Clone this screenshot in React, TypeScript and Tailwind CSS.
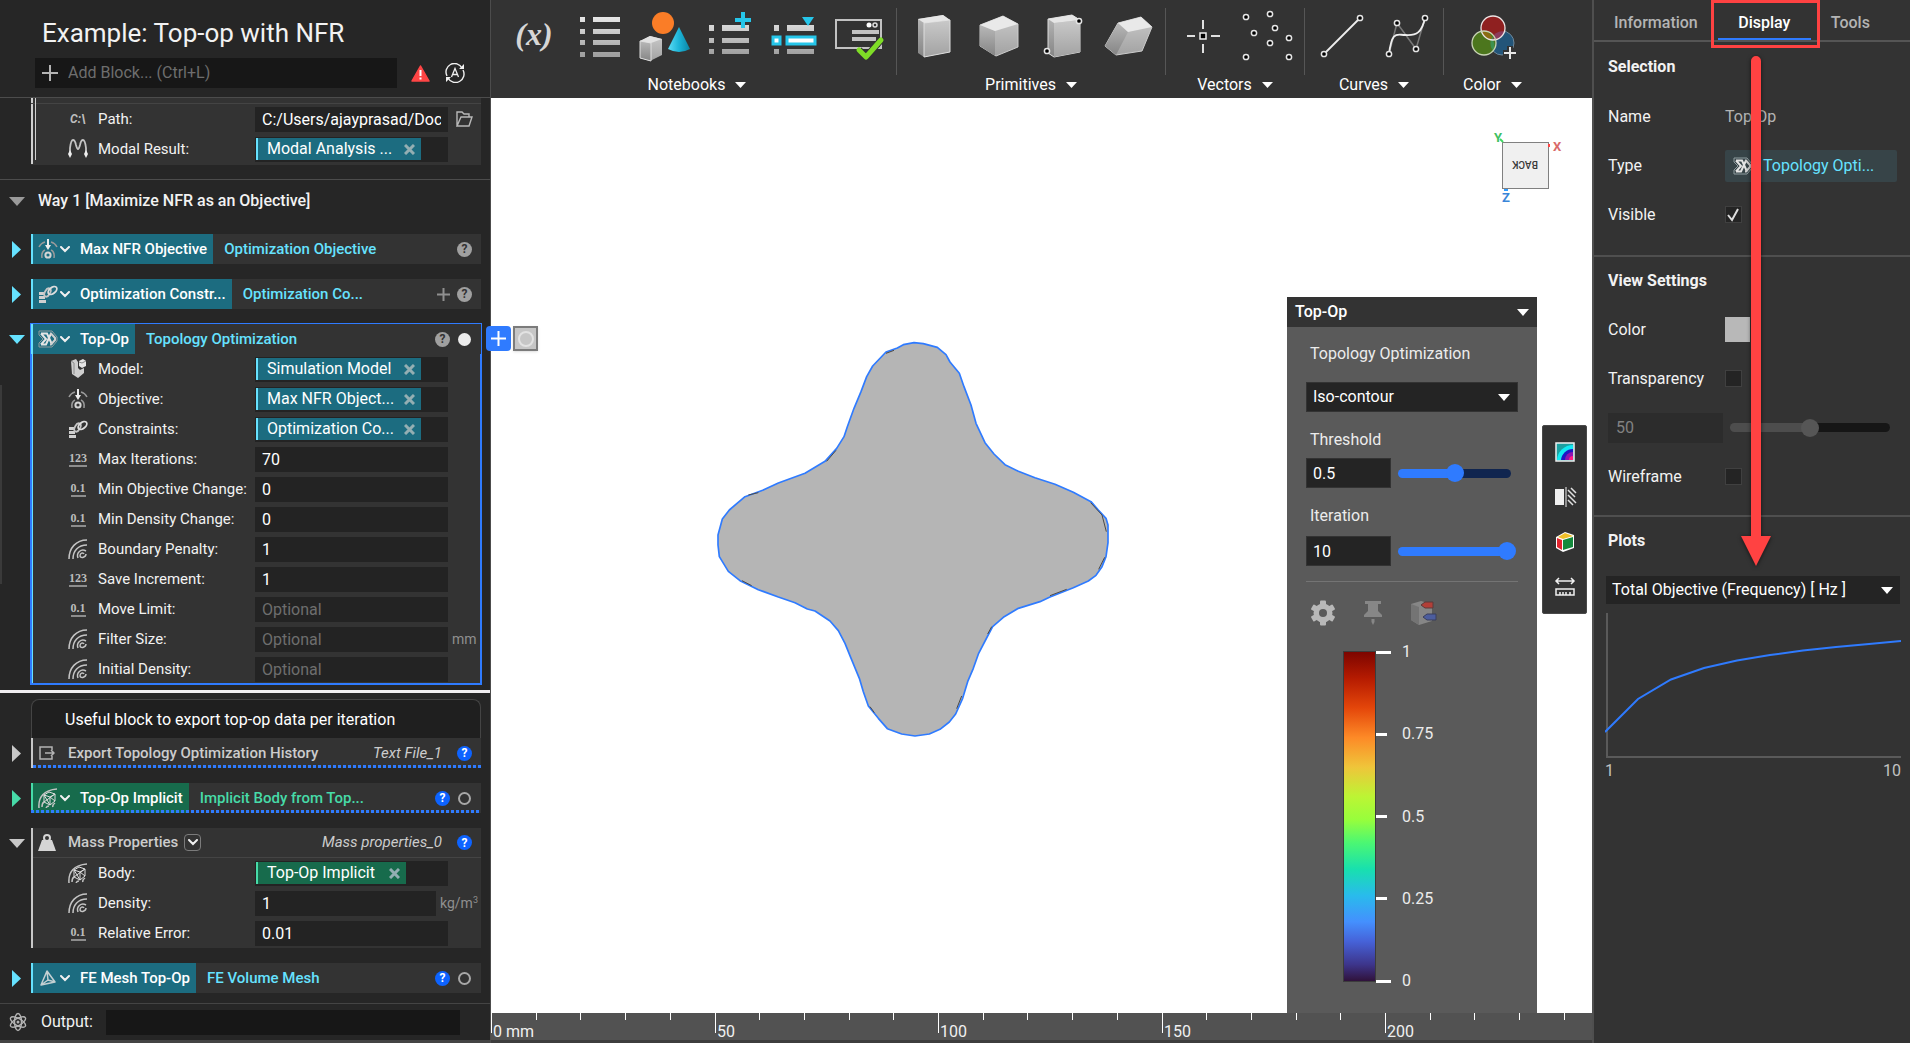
import React, { useState } from 'react';

type Tone = 'cyan' | 'green';

/* ================= ICONS ================= */

const CaretRight: React.FC<{ className?: string }> = ({ className = '' }) => (
  <svg className={className} width="9" height="17" viewBox="0 0 9 17" aria-hidden="true">
    <path d="M0 0L9 8.5L0 17Z" fill="currentColor" />
  </svg>
);

const CaretDown: React.FC<{ className?: string }> = ({ className = '' }) => (
  <svg className={className} width="16" height="9" viewBox="0 0 16 9" aria-hidden="true">
    <path d="M0 0H16L8 9Z" fill="currentColor" />
  </svg>
);

const SmallCaret: React.FC<{ className?: string }> = ({ className = '' }) => (
  <svg className={className} width="12" height="7" viewBox="0 0 12 7" aria-hidden="true">
    <path d="M0 0H12L6 7Z" fill="#ffffff" />
  </svg>
);

const Chevron = () => (
  <svg width="10" height="7" viewBox="0 0 10 7" fill="none" aria-hidden="true">
    <path d="M1 1L5 5L9 1" stroke="#f0f0f0" strokeWidth="2" strokeLinecap="round" />
  </svg>
);

const Help: React.FC<{ blue?: boolean }> = ({ blue }) => (
  <button
    aria-label="Help"
    className={`flex h-[15px] w-[15px] shrink-0 items-center justify-center rounded-full text-[12px] font-bold leading-none ${
      blue ? 'bg-[#0d63ff] text-white' : 'bg-[#a0a0a0] text-[#333333]'
    }`}
  >
    ?
  </button>
);

const Ring: React.FC<{ filled?: boolean }> = ({ filled }) => (
  <button aria-label="Toggle visibility" className="flex h-[15px] w-[15px] shrink-0 items-center justify-center">
    <span
      className={`block h-[13px] w-[13px] rounded-full ${
        filled ? 'bg-[#ececec]' : 'border-2 border-[#a8a8a8]'
      }`}
    />
  </button>
);

const OutlinedIcon: React.FC<{ children: React.ReactNode; size?: number }> = ({ children, size = 20 }) => (
  <svg width={size} height={size} viewBox="0 0 20 20" fill="none" stroke="#c4c4c4" aria-hidden="true">
    {children}
  </svg>
);

const TopOpIcon = () => (
  <OutlinedIcon>
    <path d="M1 2H14L19 8V12L14 18H1V14L5 10L1 6Z" stroke="#8f9c9f" strokeWidth="1" />
    <path d="M3 4.5H9L14 15.5M3 15.500H8L13 4.500M3 4.500L8 10L3 15.500" stroke="#e4e4e4" strokeWidth="2" />
    <path d="M12 4.500H13L17 9V11L13 15.500H12" stroke="#d0d0d0" strokeWidth="2" />
  </OutlinedIcon>
);

const ObjectiveIcon = () => (
  <OutlinedIcon>
    <path d="M10 0V9" stroke="#eeeeee" strokeWidth="2" />
    <path d="M7 6H13L10 11Z" fill="#eeeeee" stroke="none" />
    <circle cx="10" cy="16" r="2.600" stroke="#d4d4d4" strokeWidth="2" />
    <path d="M4 19Q3 13 7 11M16 19Q17 13 13 11M1 8Q3 4 7 3M19 8Q17 4 13 3" strokeWidth="1.5" stroke="#9b9b9b" />
  </OutlinedIcon>
);

const ConstraintIcon = () => (
  <OutlinedIcon>
    <path d="M1 8H6V11H1ZM1 12H7V15H1ZM1 16H8V19H1Z" fill="#d0d0d0" stroke="none" />
    <ellipse cx="9.500" cy="8.500" rx="4.500" ry="2.600" transform="rotate(-60 9.5 8.5)" strokeWidth="1.8" />
    <ellipse cx="14.500" cy="6.500" rx="5" ry="3" transform="rotate(-40 14.5 6.5)" strokeWidth="1.8" stroke="#dddddd" />
  </OutlinedIcon>
);

const ModelIcon = () => (
  <OutlinedIcon>
    <path d="M3 2L8 0L10 3V9L12 11L16 9V14L10 19L4 15Z" fill="#cfcfcf" stroke="none" />
    <path d="M11 2L15 0L18 2V7L14 9L11 7Z" fill="#e4e4e4" stroke="none" />
    <path d="M3 2L6 4V15M11 3L14 4L18 2" stroke="#8a8a8a" strokeWidth="1" />
  </OutlinedIcon>
);

const ScalarFieldIcon = () => (
  <OutlinedIcon>
    <path d="M1 20C1 9 8 1 19 1" strokeWidth="1.5" />
    <path d="M5 20C5 12 10 6 19 6" strokeWidth="1.5" />
    <path d="M10 19C8 14 13 9 18 12M18 15C18 18 13 20 12 17C12 14 15 13 16 15" strokeWidth="1.5" />
  </OutlinedIcon>
);

const BodyIcon = () => (
  <OutlinedIcon>
    <path d="M1 20C0 9 6 2 19 1M4 19Q4 15 6 14" strokeWidth="1.5" />
    <path d="M6 7L11 4L17 6V13L12 17L6 14ZM6 7L12 9L17 6M12 9V17M6 14L17 6M6 7L12 17M12 9L17 13" strokeWidth="1" stroke="#dddddd" />
    <path d="M8 20Q9 18 11 18M15 19Q14 17 17 15" strokeWidth="1.5" />
  </OutlinedIcon>
);

const NumberIcon: React.FC<{ text: string }> = ({ text }) => (
  <span className="border-b-2 border-[#8d8d8d] font-['Liberation_Serif',serif] text-[12px] font-bold leading-[13px] text-[#bcbcbc]">
    {text}
  </span>
);

const PathIcon = () => (
  <span className="text-[12px] font-bold italic leading-none text-[#bdbdbd]">C:\</span>
);

const ModalIcon = () => (
  <OutlinedIcon>
    <path d="M2 15V9Q3 1 5 1Q7 1 8 6Q9 10 10 10Q11 10 12 6Q13 1 15 1Q17 1 18 9V15" strokeWidth="1.8" />
    <path d="M2 11L4 15L2 19L0 15ZM18 11L20 15L18 19L16 15Z" fill="#eeeeee" stroke="none" />
  </OutlinedIcon>
);

const MeshIcon = () => (
  <svg width="16" height="16" viewBox="0 0 16 16" fill="none" stroke="#c4d0d2" strokeWidth="1.5" aria-hidden="true">
    <path d="M7 1L1 15L15 12ZM7 1L8 10L1 15M8 10L15 12" strokeLinejoin="round" />
  </svg>
);

const ExportIcon = () => (
  <svg width="16" height="14" viewBox="0 0 16 14" fill="none" stroke="#b4b4b4" strokeWidth="1.5" aria-hidden="true">
    <path d="M13 4V1H1V13H13V10M6 7H15M12 4L15 7L12 10" />
  </svg>
);

const WeightIcon = () => (
  <svg width="18" height="18" viewBox="0 0 18 18" aria-hidden="true">
    <circle cx="9" cy="4" r="3" fill="none" stroke="#d5d5d5" strokeWidth="2" />
    <path d="M4 6H14L18 17H0Z" fill="#d5d5d5" />
  </svg>
);

const AtomIcon = () => (
  <svg width="18" height="20" viewBox="0 0 18 20" fill="none" stroke="#b4b4b4" strokeWidth="1.4" aria-hidden="true">
    <ellipse cx="9" cy="10" rx="3.5" ry="8.5" />
    <ellipse cx="9" cy="10" rx="3.5" ry="8.5" transform="rotate(60 9 10)" />
    <ellipse cx="9" cy="10" rx="3.5" ry="8.5" transform="rotate(-60 9 10)" />
    <circle cx="9" cy="10" r="1.5" fill="#b4b4b4" stroke="none" />
  </svg>
);

/* ================= NOTEBOOK ================= */

const Caret: React.FC<{ tone?: Tone; open?: boolean; dim?: boolean }> = ({ tone, open, dim }) => {
  const color =
    tone === 'cyan' ? 'text-[#66e2ff]' : tone === 'green' ? 'text-[#47dba8]' : dim ? 'text-[#9a9a9a]' : 'text-[#c8c8c8]';
  return (
    <button
      aria-label={open ? 'Collapse' : 'Expand'}
      className={`flex h-[30px] w-[31px] shrink-0 items-center pl-[9px] ${color}`}
    >
      {open ? <CaretDown /> : <CaretRight className="ml-[3px]" />}
    </button>
  );
};

interface TagRowProps {
  tone: Tone;
  icon: React.ReactNode;
  name: string;
  type: string;
  dotted?: boolean;
  children: React.ReactNode;
}

const TagRow: React.FC<TagRowProps> = ({ tone, icon, name, type, dotted, children }) => (
  <div className="relative flex h-[30px] items-center bg-[#333333] pr-[9px]">
    <div
      className={`flex h-full items-center border-l-2 pl-[5px] pr-[6px] text-[15px] font-medium text-white ${
        tone === 'cyan' ? 'border-[#66e2ff] bg-[#1c6c80]' : 'border-[#47dba8] bg-[#176b4c]'
      }`}
    >
      <span className="flex w-[20px] justify-center">{icon}</span>
      <button aria-label="Block options" className="ml-[2px] mr-[10px]">
        <Chevron />
      </button>
      {name}
    </div>
    <span
      className={`ml-[11px] flex-1 text-[15px] font-medium ${tone === 'cyan' ? 'text-[#66e2ff]' : 'text-[#47dba8]'}`}
    >
      {type}
    </span>
    <div className="flex items-center gap-[7px]">{children}</div>
    {dotted && <DottedLine />}
  </div>
);

const DottedLine = () => (
  <div className="absolute inset-x-0 bottom-0 h-[3px] bg-[repeating-linear-gradient(to_right,#2f7bff_0_3px,transparent_3px_5px)]" />
);

const Chip: React.FC<{ tone: Tone; text: string; className: string }> = ({ tone, text, className }) => (
  <div
    className={`ml-px flex h-[22px] items-center justify-between border-l-2 pl-[9px] pr-[6px] text-[16px] leading-[22px] text-white ${className} ${
      tone === 'cyan' ? 'border-[#66e2ff] bg-[#1c6c80]' : 'border-[#47dba8] bg-[#176b4c]'
    }`}
  >
    {text}
    <button aria-label={`Remove ${text}`}>
      <svg width="11" height="11" viewBox="0 0 11 11" stroke="#93aeb2" strokeWidth="3" aria-hidden="true">
        <path d="M1 1L10 10M10 1L1 10" />
      </svg>
    </button>
  </div>
);

interface FieldProps {
  icon: React.ReactNode;
  label: string;
  value?: string;
  placeholder?: string;
  chip?: string;
  chipTone?: Tone;
  unit?: React.ReactNode;
  wideUnit?: boolean;
}

const Field: React.FC<FieldProps> = ({ icon, label, value, placeholder, chip, chipTone = 'cyan', unit, wideUnit }) => {
  const id = `field-${label.toLowerCase().replace(/[^a-z]+/g, '-')}`;
  return (
    <div className="flex h-[30px] items-center">
      <span className="ml-[35px] flex w-[24px] justify-center">{icon}</span>
      <label htmlFor={id} className="ml-[8px] w-[157px] whitespace-nowrap text-[15px] text-[#f2f2f2]">
        {label}:
      </label>
      {chip ? (
        <div id={id} className="flex h-[25px] w-[193px] items-center bg-[#232323]">
          <Chip tone={chipTone} text={chip} className={chipTone === 'cyan' ? 'w-[165px]' : 'w-[150px]'} />
        </div>
      ) : (
        <input
          id={id}
          defaultValue={value}
          placeholder={placeholder}
          className={`h-[25px] bg-[#232323] px-[7px] text-[16px] text-white outline-none placeholder:text-[#6e6e6e] ${
            wideUnit ? 'w-[181px]' : 'w-[193px]'
          }`}
        />
      )}
      {unit && <span className="ml-[4px] whitespace-nowrap text-[14px] text-[#8f8f8f]">{unit}</span>}
    </div>
  );
};

const Block: React.FC<{ caret: React.ReactNode; children: React.ReactNode }> = ({ caret, children }) => (
  <div className="flex items-start pr-[9px]">
    {caret}
    <div className="min-w-0 flex-1">{children}</div>
  </div>
);

const Notebook = () => (
  <aside className="relative z-10 flex w-[491px] shrink-0 flex-col border-r border-[#4c4c4c] bg-[#262626]">
    <header className="border-b border-[#4c4c4c] pb-[9px] pl-[35px] pt-[16px]">
      <h1 className="pl-[7px] text-[26px] leading-[34px] text-[#f2f2f2]">Example: Top-op with NFR</h1>
      <div className="mt-[8px] flex items-center">
        <div className="flex h-[30px] w-[362px] items-center bg-[#171717] pl-[7px]">
          <svg width="16" height="16" viewBox="0 0 16 16" stroke="#b4b4b4" strokeWidth="2" aria-hidden="true">
            <path d="M8 0V16M0 8H16" />
          </svg>
          <input
            aria-label="Add Block"
            placeholder="Add Block... (Ctrl+L)"
            className="ml-[10px] flex-1 bg-transparent text-[16px] outline-none placeholder:text-[#6e6e6e]"
          />
        </div>
        <button aria-label="Warnings" className="ml-[14px]">
          <svg width="19" height="17" viewBox="0 0 19 17" aria-hidden="true">
            <path d="M9.5 1L18 16H1Z" fill="#ff4545" stroke="#ff4545" strokeWidth="1.5" strokeLinejoin="round" />
            <path d="M9.5 5V11M9.5 12.5V14.5" stroke="#fff" strokeWidth="2" />
          </svg>
        </button>
        <button aria-label="Auto update" className="ml-[15px]">
          <svg width="20" height="20" viewBox="0 0 20 20" fill="none" stroke="#f0f0f0" strokeWidth="1.4" aria-hidden="true">
            <path d="M2 13A8.5 8.5 0 0 1 17 5M18 7A8.5 8.5 0 0 1 3 15" />
            <path d="M19 1V6H14ZM1 19V14H6Z" fill="#f0f0f0" stroke="none" />
            <path d="M6.500 14L10 5.500L13.500 14M7.500 11.500H12.500" strokeWidth="1.300" />
          </svg>
        </button>
      </div>
    </header>

    <div className="relative flex-1">
      <div className="absolute left-0 top-[287px] h-[199px] w-[2px] bg-[#3a3a3a]" />

      <div className="ml-[31px] mr-[9px] bg-[#333333] pb-px">
        <div className="relative border-l-2 border-[#d0d0d0] pt-[5px]">
          <div className="absolute bottom-[4px] left-[2px] top-0 w-px bg-[#d0d0d0]" />
          <div className="-ml-[2px] border-t border-[#444444]">
            <div className="flex items-center">
              <Field icon={<PathIcon />} label="Path" value="C:/Users/ajayprasad/Documents/modal" />
              <button aria-label="Browse" className="ml-[8px]">
                <svg width="17" height="16" viewBox="0 0 17 16" fill="none" stroke="#b8b8b8" strokeWidth="1.4" aria-hidden="true">
                  <path d="M1 15V1H6L8 3H13V6M1 15L5 6H16L13 15Z" />
                </svg>
              </button>
            </div>
            <Field icon={<ModalIcon />} label="Modal Result" chip="Modal Analysis ..." />
          </div>
        </div>
      </div>

      <div className="mt-[14px] border-t border-[#4c4c4c]" />
      <div className="mt-[6px] flex items-center">
        <Caret open dim />
        <h2 className="pl-[7px] text-[16px] font-medium text-[#f2f2f2]">Way 1 [Maximize NFR as an Objective]</h2>
      </div>

      <div className="mt-[18px] flex flex-col gap-[15px]">
        <Block caret={<Caret tone="cyan" />}>
          <TagRow tone="cyan" icon={<ObjectiveIcon />} name="Max NFR Objective" type="Optimization Objective">
            <Help />
          </TagRow>
        </Block>
        <Block caret={<Caret tone="cyan" />}>
          <TagRow tone="cyan" icon={<ConstraintIcon />} name="Optimization Constr..." type="Optimization Co...">
            <button aria-label="Add item">
              <svg width="13" height="13" viewBox="0 0 13 13" stroke="#8f8f8f" strokeWidth="2" aria-hidden="true">
                <path d="M6.500 0V13M0 6.500H13" />
              </svg>
            </button>
            <Help />
          </TagRow>
        </Block>
        <Block caret={<Caret tone="cyan" open />}>
          <div className="relative bg-[#333333] outline-2 -outline-offset-1 outline-[#2f7bff]">
            <TagRow tone="cyan" icon={<TopOpIcon />} name="Top-Op" type="Topology Optimization">
              <Help />
              <Ring filled />
            </TagRow>
            <div className="border-l-2 border-[#66e2ff]">
              <div className="-ml-[2px]">
                <Field icon={<ModelIcon />} label="Model" chip="Simulation Model" />
                <Field icon={<ObjectiveIcon />} label="Objective" chip="Max NFR Object..." />
                <Field icon={<ConstraintIcon />} label="Constraints" chip="Optimization Co..." />
                <Field icon={<NumberIcon text="123" />} label="Max Iterations" value="70" />
                <Field icon={<NumberIcon text="0.1" />} label="Min Objective Change" value="0" />
                <Field icon={<NumberIcon text="0.1" />} label="Min Density Change" value="0" />
                <Field icon={<ScalarFieldIcon />} label="Boundary Penalty" value="1" />
                <Field icon={<NumberIcon text="123" />} label="Save Increment" value="1" />
                <Field icon={<NumberIcon text="0.1" />} label="Move Limit" placeholder="Optional" />
                <Field icon={<ScalarFieldIcon />} label="Filter Size" placeholder="Optional" unit="mm" />
                <Field icon={<ScalarFieldIcon />} label="Initial Density" placeholder="Optional" />
              </div>
            </div>
            {/* actions floating beside the selected block */}
            <div className="absolute left-[calc(100%+5px)] top-[2px] flex gap-[2px]">
              <button aria-label="Add block" className="flex h-[25px] w-[25px] items-center justify-center rounded-[4px] bg-[#2f7bff]">
                <svg width="15" height="15" viewBox="0 0 15 15" stroke="#fff" strokeWidth="2" aria-hidden="true">
                  <path d="M7.500 0V15M0 7.500H15" />
                </svg>
              </button>
              <button
                aria-label="Isolate"
                className="flex h-[25px] w-[25px] items-center justify-center border-2 border-[#7b7b7b] bg-[#c6c6c6] shadow"
              >
                <span className="h-[16px] w-[16px] rounded-full border-2 border-[#e2e2e2]" />
              </button>
            </div>
          </div>
        </Block>
      </div>

      <div className="my-[6px] h-[3px] bg-[#f0eef0]" />

      <div className="flex flex-col gap-[15px]">
        <div>
          <p className="ml-[31px] mr-[9px] h-[39px] rounded-t-[8px] border border-b-0 border-[#444444] bg-[#1f1f1f] pl-[33px] text-[16px] leading-[40px] text-white">
            Useful block to export top-op data per iteration
          </p>
          <Block caret={<Caret />}>
            <div className="relative flex h-[30px] items-center border-l-2 border-[#c8c8c8] bg-[#333333] pl-[6px] pr-[9px]">
              <ExportIcon />
              <span className="ml-[13px] flex-1 text-[15px] font-medium text-[#cccccc]">Export Topology Optimization History</span>
              <span className="mr-[15px] text-[15px] italic text-[#cccccc]">Text File_1</span>
              <Help blue />
              <DottedLine />
            </div>
          </Block>
        </div>

        <Block caret={<Caret tone="green" />}>
          <TagRow tone="green" icon={<BodyIcon />} name="Top-Op Implicit" type="Implicit Body from Top..." dotted>
            <Help blue />
            <Ring />
          </TagRow>
        </Block>

        <Block caret={<Caret open />}>
          <div className="border-l-2 border-[#c8c8c8] bg-[#333333]">
            <div className="flex h-[30px] items-center border-b border-[#444444] pl-[5px] pr-[9px]">
              <WeightIcon />
              <span className="ml-[12px] text-[15px] font-medium text-[#cccccc]">Mass Properties</span>
              <button
                aria-label="Overloads"
                className="ml-[6px] flex h-[17px] w-[17px] items-center justify-center rounded-[4px] border border-[#7b7b7b]"
              >
                <Chevron />
              </button>
              <span className="ml-auto mr-[15px] text-[15px] italic text-[#cccccc]">Mass properties_0</span>
              <Help blue />
            </div>
            <div className="-ml-[2px]">
              <Field icon={<BodyIcon />} label="Body" chip="Top-Op Implicit" chipTone="green" />
              <Field
                icon={<ScalarFieldIcon />}
                label="Density"
                value="1"
                wideUnit
                unit={
                  <>
                    kg/m<sup className="text-[9px]">3</sup>
                  </>
                }
              />
              <Field icon={<NumberIcon text="0.1" />} label="Relative Error" value="0.01" />
            </div>
          </div>
        </Block>

        <Block caret={<Caret tone="cyan" />}>
          <TagRow tone="cyan" icon={<MeshIcon />} name="FE Mesh Top-Op" type="FE Volume Mesh">
            <Help blue />
            <Ring />
          </TagRow>
        </Block>
      </div>
    </div>

    <footer className="flex h-[40px] items-center border-b-[3px] border-t border-[#444444] pl-[9px]">
      <AtomIcon />
      <label htmlFor="output" className="ml-[14px] w-[65px] text-[16px] text-[#f2f2f2]">
        Output:
      </label>
      <input id="output" className="h-[25px] w-[354px] bg-[#171717] px-[7px] text-white outline-none" />
    </footer>
  </aside>
);

/* ================= TOOLBAR ================= */

const Gradients = () => (
  <svg width="0" height="0" className="absolute" aria-hidden="true">
    <defs>
      <linearGradient id="metal" x1="0" y1="0" x2="0" y2="1">
        <stop offset="0" stopColor="#c9c9c9" />
        <stop offset="1" stopColor="#a2a2a2" />
      </linearGradient>
      <linearGradient id="metal-dark" x1="0" y1="0" x2="0" y2="1">
        <stop offset="0" stopColor="#b8b8b8" />
        <stop offset="1" stopColor="#858585" />
      </linearGradient>
      <linearGradient id="cone" x1="0" y1="0" x2="1" y2="0">
        <stop offset="0" stopColor="#5bdcf5" />
        <stop offset="0.5" stopColor="#1cb4d8" />
        <stop offset="1" stopColor="#0b84a4" />
      </linearGradient>
      <linearGradient id="fade" x1="0" y1="0" x2="0" y2="44" gradientUnits="userSpaceOnUse">
        <stop offset="0" stopColor="#f5f5f5" />
        <stop offset="1" stopColor="#a0a0a0" />
      </linearGradient>
    </defs>
  </svg>
);

const ToolIcon: React.FC<{ label: string; children: React.ReactNode }> = ({ label, children }) => (
  <button aria-label={label} className="flex h-[52px] w-[65px] items-center justify-center">
    <svg width="52" height="52" viewBox="0 0 52 52" fill="none">
      {children}
    </svg>
  </button>
);

const ToolGroup: React.FC<{ label: string; className?: string; last?: boolean; children: React.ReactNode }> = ({
  label,
  className = 'px-1',
  last,
  children,
}) => (
  <div className="flex">
    <div className={className}>
      <div className="flex pt-[10px]">{children}</div>
      <button className="mx-auto mt-[11px] flex h-[24px] items-center gap-[10px] text-[16px] text-white">
        {label}
        <svg width="11" height="6" viewBox="0 0 11 6" aria-hidden="true">
          <path d="M0 0H11L5.500 6Z" fill="#fff" />
        </svg>
      </button>
    </div>
    {!last && <div className="mt-[8px] h-[67px] w-px bg-[#565656]" />}
  </div>
);

const PointDot: React.FC<{ x: number; y: number }> = ({ x, y }) => (
  <circle cx={x} cy={y} r="2.6" fill="#000000" stroke="#e6e6e6" strokeWidth="1.5" />
);

const CLOUD = [[4, 7], [28, 4], [33, 18], [12, 23], [28, 33], [47, 28], [4, 47], [47, 47]];

const Toolbar = () => (
  <nav className="flex h-[98px] bg-[#333333]">
    <ToolGroup label="Notebooks" className="pl-[11px] pr-[4px]">
      <ToolIcon label="Variable">
        <text x="25" y="35" textAnchor="middle" fontFamily="Liberation Serif, serif" fontStyle="italic" fontWeight="700" fontSize="32" fill="#d6d6d6">
          (x)
        </text>
      </ToolIcon>
      <ToolIcon label="List">
        {[7, 19, 30, 42].map((y) => (
          <path key={y} d={`M6 ${y}h5v5h-5zM19 ${y}h27v5h-27z`} fill="url(#fade)" />
        ))}
      </ToolIcon>
      <ToolIcon label="Shapes">
        <circle cx="24" cy="13" r="11" fill="#fa7d27" />
        <path d="M1 31L11 26L23 29V45L11 51L1 48Z" fill="url(#metal)" />
        <path d="M1 31L12 33V51L1 48Z" fill="url(#metal-dark)" stroke="#dddddd" />
        <path d="M12 33L23 29L11 26L1 31Z" fill="#e2e2e2" />
        <path d="M40 17L51 39Q40 45 29 39Z" fill="url(#cone)" />
      </ToolIcon>
      <ToolIcon label="Add to list">
        <path d="M5 15h5v6h-5zM18 15h27v6h-27zM5 28h5v5h-5zM18 28h27v5h-27zM5 39h5v5h-5zM18 39h27v5h-27z" fill="url(#fade)" />
        <path d="M39 2V18M31 10H47" stroke="#26c6ea" strokeWidth="4" />
      </ToolIcon>
      <ToolIcon label="Select from list">
        <path d="M5 15h5v6h-5zM18 15h27v6h-27zM5 39h5v5h-5zM18 39h27v5h-27z" fill="url(#fade)" />
        <path d="M4 27h7v7h-7zM18 27h28v7h-28z" fill="#ffffff" stroke="#26c6ea" strokeWidth="3" />
        <path d="M33 7H45L39 16Z" fill="#26c6ea" />
      </ToolIcon>
      <ToolIcon label="Custom block">
        <rect x="2" y="10" width="45" height="28" stroke="#c2c2c2" strokeWidth="2" />
        <path d="M18 22H45M18 29H42" stroke="#c2c2c2" strokeWidth="4" />
        <circle cx="35" cy="15" r="2.500" fill="#ffffff" />
        <circle cx="41" cy="15" r="2" stroke="#dddddd" strokeWidth="1.500" />
        <path d="M25 40L32 47L47 30" stroke="#333333" strokeWidth="7" />
        <path d="M25 40L32 47L47 30" stroke="#7fdd27" strokeWidth="5" strokeLinecap="round" strokeLinejoin="round" />
      </ToolIcon>
    </ToolGroup>

    <ToolGroup label="Primitives">
      <ToolIcon label="Box">
        <path d="M10 9L35 5L42 10V42L16 47L10 43Z" fill="url(#metal-dark)" />
        <path d="M16 13L42 10V42L16 47Z" fill="url(#metal)" stroke="#dddddd" />
        <path d="M10 9L35 5L42 10L16 13Z" fill="#e6e6e6" />
      </ToolIcon>
      <ToolIcon label="Cube">
        <path d="M7 15L30 6L45 14V37L23 46L7 36Z" fill="url(#metal)" stroke="#cccccc" />
        <path d="M7 15L22 21V46L7 36Z" fill="url(#metal-dark)" />
        <path d="M7 15L30 6L45 14L22 21Z" fill="#e9e9e9" />
      </ToolIcon>
      <ToolIcon label="Box from corners">
        <path d="M10 9L34 5L42 10V42L16 47L10 43Z" fill="url(#metal-dark)" stroke="#dddddd" />
        <path d="M16 13L42 10V42L16 47Z" fill="url(#metal)" />
        <path d="M10 9L34 5L42 10L16 13Z" fill="#e6e6e6" />
        <PointDot x={41} y={11} />
        <PointDot x={9} y={41} />
      </ToolIcon>
      <ToolIcon label="Parallelepiped">
        <path d="M15 13L38 7L49 17L39 41L13 45L2 36Z" fill="url(#metal)" stroke="#cccccc" />
        <path d="M15 13L25 22L13 45L2 36Z" fill="url(#metal-dark)" />
        <path d="M15 13L38 7L49 17L25 22Z" fill="#e9e9e9" />
      </ToolIcon>
    </ToolGroup>

    <ToolGroup label="Vectors">
      <ToolIcon label="Point">
        <path d="M26 10V19M26 34V43M10 26H18M34 26H43" stroke="#e0e0e0" strokeWidth="2" />
        <rect x="23" y="23" width="6" height="6" fill="#000000" stroke="#f0f0f0" strokeWidth="1.500" />
      </ToolIcon>
      <ToolIcon label="Point list">
        {CLOUD.map(([x, y]) => (
          <PointDot key={`${x}-${y}`} x={x} y={y} />
        ))}
      </ToolIcon>
    </ToolGroup>

    <ToolGroup label="Curves">
      <ToolIcon label="Line">
        <path d="M8 44L44 8" stroke="#eeeeee" strokeWidth="1.800" />
        <PointDot x={8} y={44} />
        <PointDot x={44} y={8} />
      </ToolIcon>
      <ToolIcon label="Spline">
        <path d="M8 44L16 13L35 39L44 8" stroke="#777777" strokeWidth="1.500" />
        <path d="M8 44C11 20 16 25 24 25C36 26 41 22 44 8" stroke="#eeeeee" strokeWidth="1.800" />
        <PointDot x={8} y={44} />
        <PointDot x={16} y={13} />
        <PointDot x={35} y={39} />
        <PointDot x={44} y={8} />
      </ToolIcon>
    </ToolGroup>

    <ToolGroup label="Color" className="px-4" last>
      <ToolIcon label="Color map">
        <circle cx="35" cy="33" r="12" fill="#235579" stroke="#6f8798" />
        <circle cx="26" cy="18" r="12" fill="#8f2020" />
        <circle cx="17" cy="33" r="12" fill="#4c761d" />
        <path d="M14.500 21.500A12 12 0 0 0 26 30A12 12 0 0 0 17 21A12 12 0 0 0 14.500 21.500" fill="#8b6c12" />
        <path d="M26 30A12 12 0 0 1 26 41A12 12 0 0 1 26 26A12 12 0 0 1 26 30" fill="#3d9150" />
        <path d="M26 30A12 12 0 0 0 37.500 21.500A12 12 0 0 0 27 25Z" fill="#8c3a5c" />
        <circle cx="26" cy="18" r="12" stroke="#ece4e4" strokeWidth="1.300" />
        <circle cx="17" cy="33" r="12" stroke="#c8d4b4" strokeWidth="1.300" />
        <path d="M43 36V50M36 43H50" stroke="#333333" strokeWidth="6" />
        <path d="M43 37V49M37 43H49" stroke="#e8e8e8" strokeWidth="2" />
      </ToolIcon>
    </ToolGroup>
  </nav>
);

/* ================= SHARED CONTROLS ================= */

const RangeTrack: React.FC<{
  label: string;
  value: number;
  min: number;
  max: number;
  step?: number;
  muted?: boolean;
  className?: string;
}> = ({ label, value, min, max, step = 1, muted, className = '' }) => {
  const [current, setCurrent] = useState(value);
  const percent = ((current - min) / (max - min)) * 100;
  const [fill, rest] = muted ? ['#4d4d4d', '#161616'] : ['#2f7bff', '#10254f'];
  return (
    <div
      className={`flex h-[9px] items-center rounded-full ${className}`}
      style={{ background: `linear-gradient(to right, ${fill} ${percent}%, ${rest} ${percent}%)` }}
    >
      <input
        type="range"
        aria-label={label}
        min={min}
        max={max}
        step={step}
        value={current}
        disabled={muted}
        onChange={(e) => setCurrent(Number(e.target.value))}
        className={`-mx-[5px] h-[18px] w-[calc(100%+10px)] shrink-0 appearance-none bg-transparent [&::-webkit-slider-thumb]:h-[18px] [&::-webkit-slider-thumb]:w-[18px] [&::-webkit-slider-thumb]:appearance-none [&::-webkit-slider-thumb]:rounded-full ${
          muted ? '[&::-webkit-slider-thumb]:bg-[#565656]' : '[&::-webkit-slider-thumb]:bg-[#2f7bff]'
        }`}
      />
    </div>
  );
};

const Dropdown: React.FC<{ label: string; option: string; className?: string }> = ({ label, option, className = '' }) => (
  <div className={`relative flex h-[30px] items-center border border-[#333333] bg-[#242424] ${className}`}>
    <select aria-label={label} className="h-full w-full appearance-none bg-transparent px-[6px] text-[16px] text-white outline-none">
      <option>{option}</option>
    </select>
    <SmallCaret className="pointer-events-none absolute right-[7px]" />
  </div>
);

/* ================= VIEWPORT ================= */

const ModelShape = () => (
  <svg className="absolute left-[199px] top-[222px]" width="440" height="440" viewBox="0 0 1320 1320" aria-label="Topology result">
    <path
      d="M672 68L700 71L742 82L768 104L780 126L808 160L822 200L843 255L858 310L885 368L912 402L945 434L985 454L1035 473L1095 493L1150 517L1203 545L1225 570L1248 595L1254 615L1254 668L1248 710L1236 740L1218 766L1195 783L1150 803L1080 831L1050 845L985 865L940 892L908 920L893 948L866 1000L850 1045L833 1085L818 1135L797 1182L778 1206L750 1228L718 1242L675 1248L635 1242L592 1226L565 1195L535 1158L520 1115L508 1075L482 1012L465 970L445 932L420 903L375 873L352 867L315 848L265 831L205 809L150 782L115 754L88 710L84 675L84 645L97 597L118 570L165 530L218 511L265 489L345 460L405 424L440 385L462 350L472 320L492 265L513 215L530 170L548 138L588 96L622 84L640 74Z"
      fill="#b5b5b5"
      stroke="#2f7bff"
      strokeWidth="5"
      strokeLinejoin="round"
    />
    <path
      d="M588 100L612 91M1202 548L1236 585L1249 635M1226 748L1244 712M1080 827L1130 808M800 1166L815 1128M156 782L185 797M410 424L438 391M893 942L905 920M540 1160L553 1178M175 525L205 518"
      stroke="#4a4a4a"
      strokeWidth="3"
      fill="none"
    />
  </svg>
);

const ViewCube = () => (
  <svg className="absolute right-[25px] top-[29px]" width="76" height="78" viewBox="0 0 76 78" aria-label="View cube">
    <g fontFamily="Roboto, sans-serif" fontWeight="700" fontSize="13">
      <rect x="11.500" y="15.500" width="46" height="46" fill="#f0f0f0" stroke="#808080" />
      <text x="3" y="15" fill="#3fbf62">Y</text>
      <path d="M9 12L12 15" stroke="#3fd862" strokeWidth="2" />
      <text x="62" y="24" fill="#d96a6a">X</text>
      <path d="M58 17V20" stroke="#ff4545" strokeWidth="2" />
      <text x="11" y="75" fill="#3a86d8">Z</text>
      <path d="M13 63H17" stroke="#2f9bff" strokeWidth="2" />
    </g>
    <text
      x="34"
      y="42"
      textAnchor="middle"
      transform="rotate(180 34 38)"
      fontFamily="Roboto, sans-serif"
      fontWeight="500"
      fontSize="10"
      fill="#3a3a3a"
    >
      BACK
    </text>
  </svg>
);

const SCALE = [
  { value: '1', major: true },
  { value: '0.75', major: false },
  { value: '0.5', major: false },
  { value: '0.25', major: false },
  { value: '0', major: true },
];

const ResultPanel = () => (
  <section className="absolute bottom-0 right-[55px] top-[199px] w-[250px] bg-[#5a5a5a] text-[16px] text-[#ececec]">
    <button className="flex h-[30px] w-full items-center justify-between bg-[#333333] px-[8px] font-medium text-white">
      Top-Op
      <SmallCaret />
    </button>
    <div className="px-[19px] pt-[15px]">
      <p className="pl-[4px] leading-[24px]">Topology Optimization</p>
      <Dropdown label="Result display" option="Iso-contour" className="mt-[16px]" />
      <label htmlFor="threshold" className="mt-[16px] block pl-[4px] leading-[24px]">
        Threshold
      </label>
      <div className="mt-[6px] flex items-center">
        <input id="threshold" defaultValue="0.5" className="h-[30px] w-[85px] border border-[#333333] bg-[#242424] px-[6px] text-white outline-none" />
        <RangeTrack label="Threshold slider" value={0.5} min={0} max={1} step={0.01} className="ml-[7px] w-[113px]" />
      </div>
      <label htmlFor="iteration" className="mt-[16px] block pl-[4px] leading-[24px]">
        Iteration
      </label>
      <div className="mt-[8px] flex items-center">
        <input id="iteration" defaultValue="10" className="h-[30px] w-[85px] border border-[#333333] bg-[#242424] px-[6px] text-white outline-none" />
        <RangeTrack label="Iteration slider" value={10} min={1} max={10} className="ml-[7px] w-[113px]" />
      </div>
      <div className="mt-[15px] border-t border-[#747474]" />
      <div className="mt-[18px] flex pl-[4px]">
        <button aria-label="Settings">
          <svg width="26" height="26" viewBox="0 0 26 26" aria-hidden="true">
            <g fill="#b8b8b8">
              <circle cx="13" cy="13" r="9.500" />
              {[0, 60, 120].map((a) => (
                <rect key={a} x="10" y="0.500" width="6" height="25" rx="1" transform={`rotate(${a} 13 13)`} />
              ))}
            </g>
            <circle cx="13" cy="13" r="4" fill="#5a5a5a" />
          </svg>
        </button>
        <button aria-label="Pin" className="ml-[27px]">
          <svg width="20" height="26" viewBox="0 0 20 26" aria-hidden="true">
            <path d="M2 1H18V4H15V11L19 15V17H1V15L5 11V4H2Z" fill="#878787" />
            <path d="M8.500 19H11.500V22L10 25L8.500 22Z" fill="#878787" />
          </svg>
        </button>
        <button aria-label="Probe" className="ml-[27px]">
          <svg width="28" height="26" viewBox="0 0 28 26" aria-hidden="true">
            <path d="M1 4L11 1L22 4V21L9 25L1 20Z" fill="#868686" />
            <path d="M1 4L9 7V25L1 20Z" fill="#747474" />
            <path d="M11 5L15 2H23V8H15Z" fill="#b23f38" stroke="#5a3a3a" />
            <path d="M13 17L17 14H26V20H17Z" fill="#4c5d9e" stroke="#3a3f5a" />
          </svg>
        </button>
      </div>
    </div>
    <div className="mt-[14px] flex pl-[56px]">
      <div className="my-[11px] h-[331px] w-[33px] border border-[#3c3c3c] bg-[linear-gradient(to_bottom,#7d0500_0%,#b51b01_8%,#e4460a_17%,#fd8a27_26%,#efc53a_35%,#bcf534_44%,#97fe3c_51%,#4bf773_58%,#18e0ae_66%,#29bbec_74%,#4490fe_82%,#4662d8_88%,#3d358b_95%,#30123b_100%)]" />
      <ul className="flex h-[353px] flex-col justify-between">
        {SCALE.map(({ value, major }) => (
          <li key={value} className="flex h-[24px] items-center text-[16px]">
            <span className={`h-[3px] bg-white ${major ? 'mr-[11px] w-[15px]' : 'mr-[15px] w-[11px]'}`} />
            {value}
          </li>
        ))}
      </ul>
    </div>
  </section>
);

const SideTools = () => (
  <div className="absolute right-[5px] top-[327px] flex w-[45px] flex-col items-center gap-[21px] rounded-[2px] border border-[#4a4a4a] bg-[#333333] py-[14px]">
    <button aria-label="Contours">
      <svg width="24" height="24" viewBox="0 0 24 24" aria-hidden="true">
        <rect x="3" y="3" width="18" height="18" fill="#1ba0a0" />
        <path d="M4 20A16 16 0 0 1 20 5V20Z" fill="#12e9f2" />
        <path d="M8 20A12 12 0 0 1 20 9V20Z" fill="#1d16c4" />
        <path d="M12 20A8 8 0 0 1 20 12V20Z" fill="#8f12b0" />
        <path d="M16 20A4 4 0 0 1 20 16V20Z" fill="#ff1a80" />
        <rect x="3" y="3" width="18" height="18" fill="none" stroke="#f0f0f0" strokeWidth="1.500" />
      </svg>
    </button>
    <button aria-label="Section">
      <svg width="24" height="24" viewBox="0 0 24 24" aria-hidden="true">
        <rect x="2" y="4" width="9" height="16" fill="#f0f0f0" />
        <path d="M13 2V22" stroke="#b0b0b0" strokeWidth="1.500" />
        <path d="M15 5L22 12M15 10L23 18M15 15L20 20M18 3L23 8" stroke="#e0e0e0" strokeWidth="1.500" />
      </svg>
    </button>
    <button aria-label="Appearance">
      <svg width="24" height="24" viewBox="0 0 24 24" aria-hidden="true">
        <path d="M3 7L12 2L21 5V18L10 22L3 18Z" fill="#ffffff" />
        <path d="M4 8L9 10V20L4 17Z" fill="#e2252f" />
        <path d="M5 7L12 3L20 6L10 9Z" fill="#efbf29" />
        <path d="M10 10L20 7V17L10 20Z" fill="#148a3c" />
      </svg>
    </button>
    <button aria-label="Measure">
      <svg width="24" height="24" viewBox="0 0 24 24" fill="none" stroke="#f0f0f0" strokeWidth="1.500" aria-hidden="true">
        <path d="M3 6H21M6 3L3 6L6 9M18 3L21 6L18 9" />
        <path d="M3 14H21V20H3ZM7 20V17M10 20V17M13 20V17M17 20V17" />
      </svg>
    </button>
  </div>
);

const Ruler = () => {
  const ticks = Array.from({ length: 25 }, (_, i) => i * 10);
  return (
    <div className="h-[30px] overflow-hidden border-b-[3px] border-[#3d3d3d] bg-[#525252]">
      <svg width="100%" height="27" aria-label="Ruler">
        {ticks.map((mm) => {
          const x = Math.round(mm * 4.47);
          const major = mm % 50 === 0;
          return (
            <g key={mm}>
              <rect x={x} y="0" width="1" height={major ? 20 : 7} fill="#ffffff" />
              {major && (
                <text x={x + 2} y="24" fontSize="16" fill="#f0f0f0">
                  {mm === 0 ? '0 mm' : mm}
                </text>
              )}
            </g>
          );
        })}
      </svg>
    </div>
  );
};

/* ================= PROPERTIES ================= */

const CheckBox: React.FC<{ id: string; checked?: boolean }> = ({ id, checked }) => (
  <span className="relative flex h-[17px] w-[17px]">
    <input
      id={id}
      type="checkbox"
      defaultChecked={checked}
      className="peer h-[17px] w-[17px] appearance-none border border-[#404040] bg-[#242424]"
    />
    <svg className="pointer-events-none absolute inset-0 hidden peer-checked:block" width="17" height="17" viewBox="0 0 17 17" fill="none" aria-hidden="true">
      <path d="M3 9L7 14L13 3" stroke="#dddddd" strokeWidth="2" />
    </svg>
  </span>
);

const PropRow: React.FC<{ label: string; htmlFor?: string; children: React.ReactNode }> = ({ label, htmlFor, children }) => (
  <div className="flex h-[49px] items-center">
    <label htmlFor={htmlFor} className="w-[117px] text-[16px] text-[#f2f2f2]">
      {label}
    </label>
    {children}
  </div>
);

const Properties = () => (
  <aside className="relative w-[318px] shrink-0 border-l-2 border-[#4f4f4f] bg-[#333333] text-[16px] text-[#f2f2f2]">
    <div className="flex h-[42px] border-b-2 border-[#555555] pl-[20px] font-medium" role="tablist">
      <button role="tab" className="h-[40px] pt-[6px] text-[#b4b4b4]">Information</button>
      <button role="tab" aria-selected className="relative ml-[20px] h-[40px] w-[93px] border-b-2 border-[#2f7bff] pt-[7px] text-white">
        Display
        <span className="absolute -left-[7px] -right-[9px] top-0 h-[48px] border-[3px] border-[#ff4242]" />
      </button>
      <button role="tab" className="ml-[20px] h-[40px] pt-[6px] text-[#b4b4b4]">Tools</button>
    </div>

    <section className="h-[215px] border-b-2 border-[#4f4f4f] pl-[14px] pt-[13px]">
      <h2 className="mb-[13px] font-bold leading-[24px]">Selection</h2>
      <PropRow label="Name">
        <span className="text-[#b4b4b4]">Top-Op</span>
      </PropRow>
      <PropRow label="Type">
        <button className="flex h-[32px] w-[172px] items-center rounded-[2px] bg-[#374448] pl-[8px] text-[#66e2ff]">
          <TopOpIcon />
          <span className="ml-[10px]">Topology Opti...</span>
        </button>
      </PropRow>
      <PropRow label="Visible" htmlFor="visible">
        <CheckBox id="visible" checked />
      </PropRow>
    </section>

    <section className="h-[260px] border-b-2 border-[#4f4f4f] pl-[14px] pt-[12px]">
      <h2 className="mb-[12px] font-bold leading-[24px]">View Settings</h2>
      <PropRow label="Color" htmlFor="color">
        <button id="color" aria-label="Color" className="h-[25px] w-[25px] bg-[#b8b8b8]" />
      </PropRow>
      <PropRow label="Transparency" htmlFor="transparency">
        <CheckBox id="transparency" />
      </PropRow>
      <div className="flex h-[49px] items-center">
        <input
          aria-label="Transparency amount"
          defaultValue="50"
          disabled
          className="h-[30px] w-[115px] bg-[#2c2c2c] px-[8px] text-[#828282]"
        />
        <RangeTrack label="Transparency slider" value={50} min={0} max={100} muted className="ml-[7px] w-[160px]" />
      </div>
      <PropRow label="Wireframe" htmlFor="wireframe">
        <CheckBox id="wireframe" />
      </PropRow>
    </section>

    <section className="pl-[11px] pr-[9px] pt-[12px]">
      <h2 className="pl-[3px] font-bold leading-[24px]">Plots</h2>
      <Dropdown label="Plot" option="Total Objective (Frequency) [ Hz ]" className="mt-[22px]" />
      <svg className="mt-[8px] w-full" height="146" viewBox="0 0 296 146" fill="none" aria-label="Objective per iteration">
        <path d="M2 0V144H296" stroke="#5a5a5a" strokeWidth="2" />
        <path
          d="M0 119L33 86L66 66.500L99 55L132 47.500L165 42L198 37.500L231 34L264 31L296 28"
          stroke="#2f7bff"
          strokeWidth="2"
        />
      </svg>
      <div className="flex justify-between text-[#c2c2c2]">
        <span>1</span>
        <span>10</span>
      </div>
    </section>

    {/* callout arrow from the Display tab to the plot */}
    <svg
      className="pointer-events-none absolute left-[145px] top-[56px] drop-shadow-[0_1px_2px_rgba(0,0,0,0.6)]"
      width="34"
      height="512"
      viewBox="0 0 34 512"
      aria-hidden="true"
    >
      <path d="M12 5A5 5 0 0 1 22 5V480H32L17 510L2 480H12Z" fill="#ff4242" />
    </svg>
  </aside>
);

const App: React.FC = () => (
  <div className="flex min-h-screen bg-[#333333] font-[Roboto,sans-serif]">
    <Gradients />
    <Notebook />
    <main className="flex min-w-0 flex-1 flex-col">
      <Toolbar />
      <div className="relative flex-1 overflow-hidden bg-white">
        <ModelShape />
        <ViewCube />
        <ResultPanel />
        <SideTools />
      </div>
      <Ruler />
    </main>
    <Properties />
  </div>
);

export default App;
